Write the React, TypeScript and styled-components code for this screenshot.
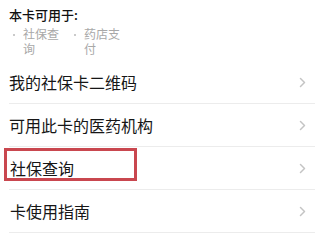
import React from "react";
import styled, { createGlobalStyle } from "styled-components";

const Global = createGlobalStyle`
  html, body { margin: 0; padding: 0; background: #ffffff; }
  body { font-family: "Noto Sans CJK SC", "Noto Sans", sans-serif; }
`;

const Page = styled.div`
  width: 315px;
  background: #ffffff;
  overflow: hidden;
`;

const Header = styled.div`
  padding: 6px 9px 5px 9px;
`;

const Title = styled.div`
  font-size: 13px;
  line-height: 17px;
  font-weight: 500;
  color: #111111;
`;

const UseList = styled.ul`
  list-style: none;
  margin: 3px 0 0 0;
  padding: 0;
  display: flex;
`;

const UseItem = styled.li`
  width: 61px;
  display: flex;
  align-items: flex-start;
  padding-left: 4px;
  box-sizing: border-box;
`;

const Dot = styled.span`
  width: 2px;
  height: 2px;
  border-radius: 50%;
  background: #b8b8b8;
  margin-top: 8px;
  margin-right: 8px;
  flex: none;
`;

const UseText = styled.span`
  width: 38px;
  font-size: 12px;
  line-height: 15px;
  color: #a8a8a8;
`;

const Menu = styled.div`
  padding-left: 9px;
`;

const Row = styled.div`
  position: relative;
  height: 42px;
  border-bottom: 1px solid #ececec;
  display: flex;
  align-items: center;
  justify-content: space-between;
  padding-right: 9px;
`;

const RowLabel = styled.span<{ $indent: number }>`
  font-size: 16px;
  color: #161616;
  padding-left: ${(p) => p.$indent}px;
`;

const Highlight = styled.div`
  position: absolute;
  left: -5px;
  top: 1px;
  width: 133px;
  height: 33px;
  border: 3px solid #c9474f;
  box-sizing: border-box;
  pointer-events: none;
`;

const Chevron = () => (
  <svg width="7" height="11" viewBox="0 0 7 11" style={{ display: "block" }}>
    <polyline
      points="1.5,1.5 5.5,5.5 1.5,9.5"
      fill="none"
      stroke="#c4c4c4"
      strokeWidth="1.5"
      strokeLinecap="round"
      strokeLinejoin="round"
    />
  </svg>
);

const rows = [
  { label: "我的社保卡二维码", indent: 0 },
  { label: "可用此卡的医药机构", indent: 0 },
  { label: "社保查询", indent: 1, highlight: true },
  { label: "卡使用指南", indent: 1 },
];

export default function App() {
  return (
    <Page>
      <Global />
      <Header>
        <Title>本卡可用于:</Title>
        <UseList>
          <UseItem>
            <Dot />
            <UseText>社保查询</UseText>
          </UseItem>
          <UseItem>
            <Dot />
            <UseText>药店支付</UseText>
          </UseItem>
        </UseList>
      </Header>
      <Menu>
        {rows.map((r) => (
          <Row key={r.label}>
            <RowLabel $indent={r.indent}>{r.label}</RowLabel>
            {r.highlight && <Highlight />}
            <Chevron />
          </Row>
        ))}
      </Menu>
    </Page>
  );
}
